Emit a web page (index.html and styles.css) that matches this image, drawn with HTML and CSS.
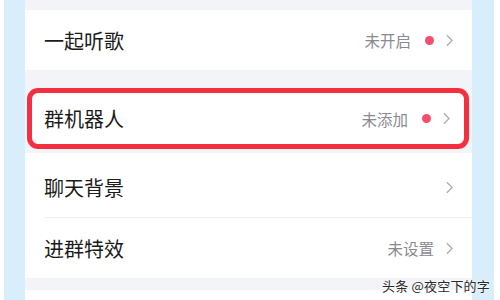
FILE: index.html
```html
<!DOCTYPE html>
<html lang="zh-CN">

<head>
    <meta charset="UTF-8">
    <meta name="viewport" content="width=device-width, initial-scale=1.0">
    <title>群设置</title>
    <link rel="stylesheet" href="styles.css">
</head>

<body>
    <div class="frame">
        <div class="panel">
            <div class="card">
                <div class="row">
                    <span class="label">一起听歌</span>
                    <span class="value">未开启</span>
                    <span class="dot"></span>
                    <svg class="chevron" viewBox="0 0 8 14"><polyline points="1,1 7,7 1,13" /></svg>
                </div>
            </div>

            <div class="row marked">
                <span class="label">群机器人</span>
                <span class="value">未添加</span>
                <span class="dot"></span>
                <svg class="chevron" viewBox="0 0 8 14"><polyline points="1,1 7,7 1,13" /></svg>
            </div>

            <div class="card">
                <div class="row tall">
                    <span class="label">聊天背景</span>
                    <svg class="chevron" viewBox="0 0 8 14"><polyline points="1,1 7,7 1,13" /></svg>
                </div>
                <div class="row divided">
                    <span class="label">进群特效</span>
                    <span class="value">未设置</span>
                    <svg class="chevron" viewBox="0 0 8 14"><polyline points="1,1 7,7 1,13" /></svg>
                </div>
            </div>

            <div class="card bottom"></div>
        </div>
    </div>

    <div class="watermark">头条 @夜空下的字</div>
</body>

</html>
```

FILE: styles.css
```css
body {
    margin: 0;
    height: 300px;
    overflow: hidden;
    background-color: #fff;
    font-family: "Noto Sans CJK SC", "Noto Sans", sans-serif;
}

.frame {
    height: 300px;
    margin: 0 6px 0 4px;
    padding: 0 22px 0 21px;
    background-color: #d8eefb;
}

.panel {
    height: 300px;
    padding-top: 10px;
    box-sizing: border-box;
    background-color: #f3f4f8;
}

.card {
    background-color: #fff;
}

.row {
    display: flex;
    align-items: center;
    height: 60px;
    padding: 0 19px 0 19px;
    background-color: #fff;
}

.tall {
    height: 64px;
    padding-top: 4px;
    box-sizing: border-box;
}

.divided {
    height: 60px;
    border-top: 1px solid #f1f2f4;
    margin-left: 19px;
    padding-left: 0;
}

.marked {
    height: 51px;
    margin: 18px 3px 4px 2px;
    padding: 0 14px 0 12px;
    border: 5px solid #f52f40;
    border-radius: 11px;
}

.label {
    flex: 1;
    font-size: 20px;
    color: #1b1b1b;
}

.value {
    font-size: 15.5px;
    color: #8a8a8f;
}

.dot {
    width: 9px;
    height: 9px;
    margin-left: 14px;
    border-radius: 50%;
    background-color: #f34e6c;
}

.chevron {
    width: 7px;
    height: 13px;
    margin-left: 12px;
    fill: none;
    stroke: #adadb2;
    stroke-width: 1.6;
}

.bottom {
    height: 20px;
    margin-top: 12px;
}

.watermark {
    position: absolute;
    right: 10px;
    bottom: 5px;
    font-size: 13px;
    letter-spacing: 0.2px;
    color: #2a2a2a;
    text-shadow: 0 0 2px #fff, 0 0 2px #fff;
}
```
